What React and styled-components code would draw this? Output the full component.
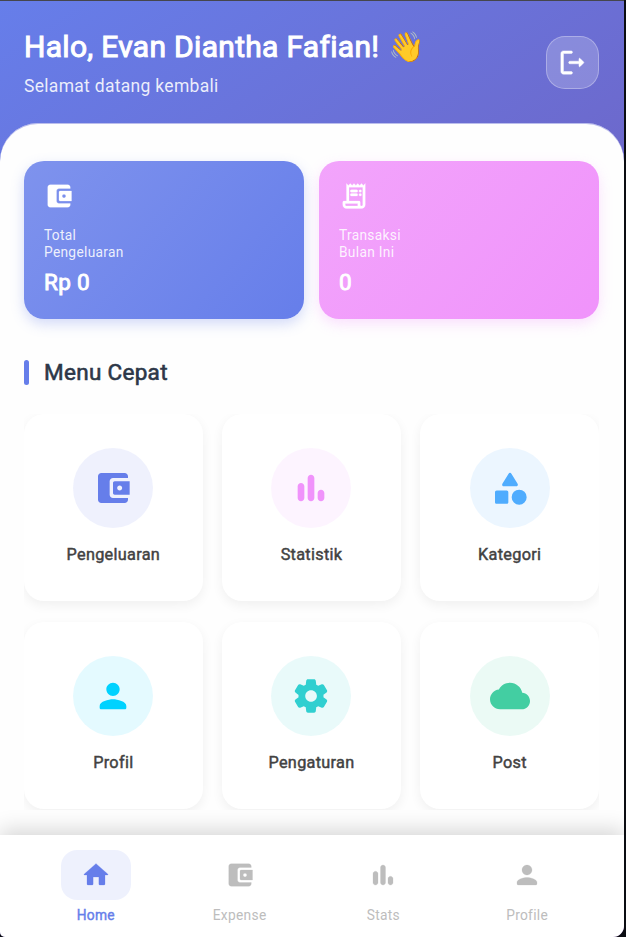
import React from "react";
import styled, { createGlobalStyle, css } from "styled-components";

const GlobalStyle = createGlobalStyle`
  * { box-sizing: border-box; }
  body { margin: 0; background: #0b0d12; font-family: Roboto, sans-serif; letter-spacing: 0.3px; }
  h1, h2, p { margin: 0; font-weight: 400; }
  button { font: inherit; letter-spacing: inherit; border: 0; padding: 0; background: none; }
`;

const emphasis = (width) => css`
  font-weight: 400;
  -webkit-text-stroke: ${width}px currentColor;
`;

const Screen = styled.main`
  display: flex;
  flex-direction: column;
  width: 624px;
  height: 937px;
  border-top: 1px solid #45464d;
  border-radius: 0 0 11px 5px;
  overflow: hidden;
  background: linear-gradient(146.3deg, #667eea, #764ba2);
`;

const Header = styled.header`
  display: flex;
  justify-content: space-between;
  align-items: flex-start;
  height: 122px;
  flex: none;
  padding: 27px 25px 0 24px;
`;

const Greeting = styled.h1`
  display: flex;
  align-items: center;
  gap: 9px;
  height: 38px;
  font-size: 30px;
  ${emphasis(1)}
  line-height: 38px;
  color: #fff;
  white-space: nowrap;
`;

const Wave = styled.span`
  font-family: "Noto Color Emoji", sans-serif;
  font-size: 29.5px;
  -webkit-text-stroke: 0;
`;

const Welcome = styled.p`
  margin-top: 8px;
  font-size: 17.5px;
  line-height: 24px;
  color: rgba(255, 255, 255, 0.88);
`;

const LogoutButton = styled.button`
  display: flex;
  align-items: center;
  justify-content: center;
  width: 53px;
  height: 53px;
  margin-top: 8px;
  border: 1px solid rgba(255, 255, 255, 0.3);
  border-radius: 19px;
  background: rgba(255, 255, 255, 0.2);
  color: #fff;
`;

const Sheet = styled.section`
  flex: 1;
  min-height: 0;
  padding: 38px 25px 0 24px;
  border-radius: 38px 38px 0 0;
  background: #fefefe;
  box-shadow: inset 0 1px rgba(107, 112, 215, 0.45);
`;

const Stats = styled.div`
  display: grid;
  grid-template-columns: 1fr 1fr;
  gap: 15px;
`;

const StatCard = styled.article`
  height: 157.5px;
  padding: 20px 20px 0;
  border-radius: 20px;
  color: #fff;
  background: linear-gradient(130deg, rgba(${(p) => p.$rgb}, 0.84), rgb(${(p) => p.$rgb}));
  box-shadow: 0 5px 13px rgba(${(p) => p.$rgb}, 0.28);
`;

const StatLabel = styled.p`
  margin-top: 16px;
  font-size: 13.75px;
  line-height: 17px;
  color: rgba(255, 255, 255, 0.88);
`;

const StatValue = styled.p`
  margin-top: 7px;
  font-size: 22.5px;
  ${emphasis(0.9)}
  line-height: 28px;
`;

const SectionTitle = styled.h2`
  display: flex;
  align-items: center;
  gap: 15px;
  height: 26px;
  margin-top: 40.5px;
  font-size: 22.5px;
  ${emphasis(0.6)}
  color: #2d3748;
`;

const Accent = styled.span`
  width: 5px;
  height: 25px;
  border-radius: 2.5px;
  background: #667eea;
`;

const MenuGrid = styled.div`
  display: grid;
  grid-template-columns: repeat(3, 1fr);
  grid-auto-rows: 187px;
  gap: 21px 19.6px;
  height: 396px;
  margin-top: 29px;
  overflow: hidden;
`;

const MenuCard = styled.button`
  display: flex;
  flex-direction: column;
  align-items: center;
  padding-top: 34px;
  border-radius: 20px;
  background: #fff;
  box-shadow: 0 4px 12px rgba(0, 0, 0, 0.06);
`;

const IconDisc = styled.span`
  display: flex;
  align-items: center;
  justify-content: center;
  width: 80px;
  height: 80px;
  border-radius: 50%;
  color: rgb(${(p) => p.$rgb});
  background: rgba(${(p) => p.$rgb}, 0.105);
`;

const MenuLabel = styled.span`
  margin-top: 16px;
  font-size: 16.25px;
  ${emphasis(0.45)}
  line-height: 21px;
  color: #424242;
`;

const BottomNav = styled.nav`
  position: relative;
  display: flex;
  flex: none;
  height: 102px;
  padding: 15px 25px 0 24px;
  background: #fff;
  box-shadow: 0 -5px 20px rgba(0, 0, 0, 0.16);
`;

const NavItem = styled.button`
  display: flex;
  flex: 1;
  flex-direction: column;
  align-items: center;
  font-size: 13.75px;
  ${(p) => p.$active && emphasis(0.4)}
  line-height: 18px;
  color: ${(p) => (p.$active ? "#667eea" : "#bdbdbd")};
`;

const NavPill = styled.span`
  display: flex;
  align-items: center;
  justify-content: center;
  width: 70px;
  height: 50px;
  margin-bottom: 6px;
  border-radius: 16px;
  background: ${(p) => (p.$active ? "rgba(102, 126, 234, 0.11)" : "transparent")};
`;

const Svg = styled.svg`
  display: block;
  fill: currentColor;
  stroke: currentColor;
  stroke-width: ${(p) => p.$stroke || 0};
`;

const paths = {
  wallet:
    "M10 16V8c0-1.1.89-2 2-2h9V5c0-1.1-.9-2-2-2H5c-1.11 0-2 .9-2 2v14c0 1.1.89 2 2 2h14c1.1 0 2-.9 2-2v-1h-9c-1.11 0-2-.9-2-2zm3-8c-.55 0-1 .45-1 1v6c0 .55.45 1 1 1h9V8h-9zm3 5.5c-.83 0-1.5-.67-1.5-1.5s.67-1.5 1.5-1.5 1.5.67 1.5 1.5-.67 1.5-1.5 1.5z",
  receipt:
    "M19.5 3.5 18 2l-1.5 1.5L15 2l-1.5 1.5L12 2l-1.5 1.5L9 2 7.5 3.5 6 2v14H4c-.55 0-1 .45-1 1v2c0 1.66 1.34 3 3 3h12c1.66 0 3-1.34 3-3V2l-1.5 1.5zM15 20H6c-.55 0-1-.45-1-1v-1h10v2zm4-1c0 .55-.45 1-1 1s-1-.45-1-1v-2c0-.55-.45-1-1-1H8V5h11v14zM10 7h4a1 1 0 0 1 0 2h-4a1 1 0 0 1 0-2zM17 7a1 1 0 0 1 0 2 1 1 0 0 1 0-2zM10 10h4a1 1 0 0 1 0 2h-4a1 1 0 0 1 0-2zM17 10a1 1 0 0 1 0 2 1 1 0 0 1 0-2z",
  chart:
    "M6 20c-1.1 0-2-.9-2-2v-7c0-1.1.9-2 2-2s2 .9 2 2v7c0 1.1-.9 2-2 2zM12 20c-1.1 0-2-.9-2-2V6c0-1.1.9-2 2-2s2 .9 2 2v12c0 1.1-.9 2-2 2zM18 20c-1.1 0-2-.9-2-2v-3c0-1.1.9-2 2-2s2 .9 2 2v3c0 1.1-.9 2-2 2z",
  category:
    "M11.15 3.4 7.43 9.48c-.41.66.07 1.52.85 1.52h7.43c.78 0 1.26-.86.85-1.52L12.85 3.4c-.39-.64-1.31-.64-1.7 0zM17.5 13a4.5 4.5 0 1 1 0 9 4.5 4.5 0 0 1 0-9zM4 21.5h6c.55 0 1-.45 1-1v-6c0-.55-.45-1-1-1H4c-.55 0-1 .45-1 1v6c0 .55.45 1 1 1z",
  person:
    "M12 12c2.21 0 4-1.79 4-4s-1.79-4-4-4-4 1.79-4 4 1.79 4 4 4zm0 2c-2.67 0-8 1.34-8 4v1c0 .55.45 1 1 1h14c.55 0 1-.45 1-1v-1c0-2.66-5.33-4-8-4z",
  settings:
    "M19.5 12c0-.23-.01-.45-.03-.68l1.86-1.41c.4-.3.51-.86.26-1.3l-1.87-3.23c-.25-.44-.79-.62-1.25-.42l-2.15.91c-.37-.26-.76-.49-1.17-.68l-.29-2.31C14.8 2.38 14.37 2 13.87 2h-3.73c-.51 0-.94.38-1 .88l-.29 2.31c-.41.19-.8.42-1.17.68l-2.15-.91c-.46-.2-1-.02-1.25.42L2.41 8.62c-.25.44-.14.99.26 1.3l1.86 1.41c-.02.22-.03.44-.03.67s.01.45.03.68l-1.86 1.41c-.4.3-.51.86-.26 1.3l1.87 3.23c.25.44.79.62 1.25.42l2.15-.91c.37.26.76.49 1.17.68l.29 2.31c.06.5.49.88.99.88h3.73c.5 0 .93-.38.99-.88l.29-2.31c.41-.19.8-.42 1.17-.68l2.15.91c.46.2 1 .02 1.25-.42l1.87-3.23c.25-.44.14-.99-.26-1.3l-1.86-1.41c.03-.23.04-.45.04-.68zm-7.46 3.5c-1.93 0-3.5-1.57-3.5-3.5s1.57-3.5 3.5-3.5 3.5 1.57 3.5 3.5-1.57 3.5-3.5 3.5z",
  cloud:
    "M19.35 10.04C18.67 6.59 15.64 4 12 4 9.11 4 6.6 5.64 5.35 8.04 2.34 8.36 0 10.91 0 14c0 3.31 2.69 6 6 6h13c2.76 0 5-2.24 5-5 0-2.64-2.05-4.78-4.65-4.96z",
  home:
    "M9.7 19.2v-5.6h4.6v5.6c0 .45.35.8.8.8h3.3c.45 0 .8-.35.8-.8V12h1.9c.46 0 .6-.5.28-.8L12.5 3.3c-.3-.27-.7-.27-1 0L2.62 11.2c-.32.3-.18.8.28.8h1.9v7.2c0 .45.35.8.8.8h3.3c.45 0 .8-.35.8-.8z",
  logout:
    "M5 5h6c.55 0 1-.45 1-1s-.45-1-1-1H5c-1.1 0-2 .9-2 2v14c0 1.1.9 2 2 2h6c.55 0 1-.45 1-1s-.45-1-1-1H5V5zM20.65 11.65l-2.79-2.79c-.32-.32-.86-.1-.86.35V11h-7c-.55 0-1 .45-1 1s.45 1 1 1h7v1.79c0 .45.54.67.85.35l2.79-2.79c.2-.19.2-.51.01-.7z",
};

const Icon = ({ name, size, stroke }) => (
  <Svg width={size} height={size} viewBox="0 0 24 24" $stroke={stroke} aria-hidden="true">
    <path fillRule="evenodd" d={paths[name]} />
  </Svg>
);

const stats = [
  { icon: "wallet", rgb: "102, 126, 234", lines: ["Total", "Pengeluaran"], value: "Rp 0" },
  { icon: "receipt", rgb: "240, 147, 251", lines: ["Transaksi", "Bulan Ini"], value: "0" },
];

const menu = [
  { label: "Pengeluaran", icon: "wallet", rgb: "102, 126, 234" },
  { label: "Statistik", icon: "chart", rgb: "240, 147, 251" },
  { label: "Kategori", icon: "category", rgb: "79, 172, 254" },
  { label: "Profil", icon: "person", rgb: "0, 210, 255" },
  { label: "Pengaturan", icon: "settings", rgb: "48, 207, 208" },
  { label: "Post", icon: "cloud", rgb: "67, 206, 162" },
];

const tabs = [
  { label: "Home", icon: "home", active: true },
  { label: "Expense", icon: "wallet" },
  { label: "Stats", icon: "chart" },
  { label: "Profile", icon: "person" },
];

export default function App() {
  return (
    <>
      <GlobalStyle />
      <Screen>
        <Header>
          <div>
            <Greeting>
              Halo, Evan Diantha Fafian! <Wave>👋</Wave>
            </Greeting>
            <Welcome>Selamat datang kembali</Welcome>
          </div>
          <LogoutButton aria-label="Logout">
            <Icon name="logout" size={31} stroke={0.35} />
          </LogoutButton>
        </Header>
        <Sheet>
          <Stats>
            {stats.map((s) => (
              <StatCard key={s.icon} $rgb={s.rgb}>
                <Icon name={s.icon} size={30} stroke={0.2} />
                <StatLabel>
                  {s.lines[0]}
                  <br />
                  {s.lines[1]}
                </StatLabel>
                <StatValue>{s.value}</StatValue>
              </StatCard>
            ))}
          </Stats>
          <SectionTitle>
            <Accent />
            Menu Cepat
          </SectionTitle>
          <MenuGrid>
            {menu.map((m) => (
              <MenuCard key={m.label}>
                <IconDisc $rgb={m.rgb}>
                  <Icon name={m.icon} size={40} />
                </IconDisc>
                <MenuLabel>{m.label}</MenuLabel>
              </MenuCard>
            ))}
          </MenuGrid>
        </Sheet>
        <BottomNav>
          {tabs.map((t) => (
            <NavItem key={t.label} $active={t.active}>
              <NavPill $active={t.active}>
                <Icon name={t.icon} size={30} stroke={0.2} />
              </NavPill>
              {t.label}
            </NavItem>
          ))}
        </BottomNav>
      </Screen>
    </>
  );
}
